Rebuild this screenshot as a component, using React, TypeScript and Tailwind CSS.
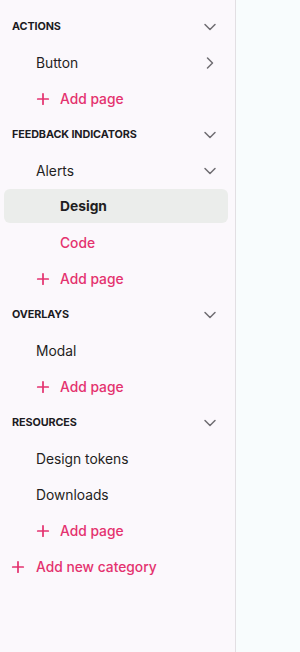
import { ChevronDown, ChevronRight, Plus } from 'lucide-react';

type Page = { label: string; active?: boolean; pink?: boolean };
type Item = { label: string; open?: boolean; hasChildren?: boolean; pages?: Page[] };
type Category = { title: string; items: Item[] };

const categories: Category[] = [
  { title: 'Actions', items: [{ label: 'Button', hasChildren: true }] },
  {
    title: 'Feedback indicators',
    items: [
      {
        label: 'Alerts',
        hasChildren: true,
        open: true,
        pages: [{ label: 'Design', active: true }, { label: 'Code', pink: true }],
      },
    ],
  },
  { title: 'Overlays', items: [{ label: 'Modal' }] },
  { title: 'Resources', items: [{ label: 'Design tokens' }, { label: 'Downloads' }] },
];

const AddRow = ({ label, indent }: { label: string; indent: boolean }) => (
  <div
    className={`h-9 flex items-center text-[#e4326f] font-medium text-[13.8px] ${
      indent ? 'pl-[34px]' : 'pl-[9px]'
    }`}
  >
    <Plus size={18} strokeWidth={2.3} className={indent ? 'mr-[8px]' : 'mr-[9px]'} />
    {label}
  </div>
);

export default function App() {
  return (
    <div className="flex h-[652px] w-[300px]" style={{ fontFamily: 'Inter, "Liberation Sans", sans-serif' }}>
      <aside className="w-[236px] shrink-0 bg-[#fbf8fc] border-r border-[#e2dfe3] pt-[9px]">
        {categories.map((c) => (
          <div key={c.title}>
            <div className="h-9 flex items-center justify-between pl-3 pr-[15px]">
              <span className="uppercase text-[10.8px] font-bold text-[#1c1b1f] tracking-[-0.1px]">{c.title}</span>
              <ChevronDown size={20} strokeWidth={1.8} className="text-[#6f6d72]" />
            </div>
            {c.items.map((it) => (
              <div key={it.label}>
                <div className="h-9 flex items-center justify-between pl-9 pr-[15px]">
                  <span className="text-[13.8px] text-[#1f1e22]">{it.label}</span>
                  {it.hasChildren &&
                    (it.open ? (
                      <ChevronDown size={20} strokeWidth={1.8} className="text-[#6f6d72]" />
                    ) : (
                      <ChevronRight size={20} strokeWidth={1.8} className="text-[#6f6d72]" />
                    ))}
                </div>
                {it.pages?.map((p) =>
                  p.active ? (
                    <div
                      key={p.label}
                      className="h-[34px] mt-0 mb-[2px] ml-1 mr-[7px] pl-[56px] flex items-center rounded-md bg-[#ebedeb] font-bold text-[13.8px] text-[#1f1e22]"
                    >
                      {p.label}
                    </div>
                  ) : (
                    <div
                      key={p.label}
                      className={`h-9 flex items-center pl-[60px] text-[13.8px] ${
                        p.pink ? 'text-[#e4326f] font-medium' : 'text-[#1f1e22]'
                      }`}
                    >
                      {p.label}
                    </div>
                  )
                )}
              </div>
            ))}
            <AddRow label="Add page" indent />
          </div>
        ))}
        <AddRow label="Add new category" indent={false} />
      </aside>
      <main className="flex-1 bg-[#f8fcfd]" />
    </div>
  );
}
